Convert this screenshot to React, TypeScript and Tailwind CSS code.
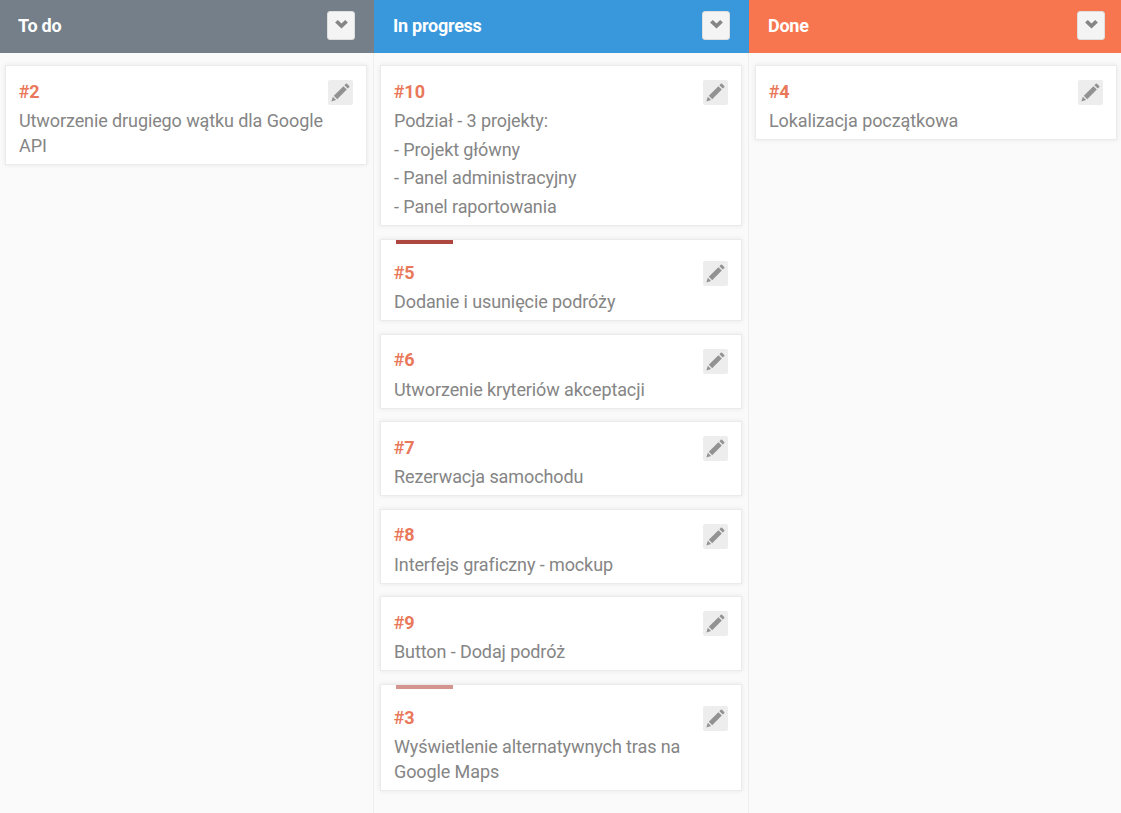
type Card = { id: number; lines: string[]; height: string; marker?: string };
type Column = { title: string; header: string; body: string; column: string; cards: Card[] };

const columns: Column[] = [
  {
    title: 'To do',
    header: 'bg-[#747f89] pl-[18px] pr-[19px]',
    body: 'pl-[5px] pr-[6px] border-r',
    column: 'w-[374px]',
    cards: [{ id: 2, lines: ['Utworzenie drugiego wątku dla Google API'], height: 'h-[100px]' }],
  },
  {
    title: 'In progress',
    header: 'bg-[#3998dc] pl-[19px] pr-[19px]',
    body: 'pl-[6px] pr-[6px] border-r',
    column: 'w-[375px]',
    cards: [
      {
        id: 10,
        lines: ['Podział - 3 projekty:', '- Projekt główny', '- Panel administracyjny', '- Panel raportowania'],
        height: 'h-[161px]',
      },
      { id: 5, lines: ['Dodanie i usunięcie podróży'], height: 'h-[81.9px]', marker: 'bg-[#ad4740]' },
      { id: 6, lines: ['Utworzenie kryteriów akceptacji'], height: 'h-[75px] mb-[-0.5px]' },
      { id: 7, lines: ['Rezerwacja samochodu'], height: 'h-[75px] mb-[-0.5px]' },
      { id: 8, lines: ['Interfejs graficzny - mockup'], height: 'h-[75px] mb-[-0.5px]' },
      { id: 9, lines: ['Button - Dodaj podróż'], height: 'h-[75px] mb-[-0.3px]' },
      {
        id: 3,
        lines: ['Wyświetlenie alternatywnych tras na Google Maps'],
        height: 'h-[107px]',
        marker: 'bg-[#d5958f]',
      },
    ],
  },
  {
    title: 'Done',
    header: 'bg-[#f8764f] pl-[19px] pr-[16px]',
    body: 'pl-[6px] pr-[4px]',
    column: 'w-[372px]',
    cards: [{ id: 4, lines: ['Lokalizacja początkowa'], height: 'h-[75px]' }],
  },
];

function Chevron() {
  return (
    <svg className="block h-[9px] w-[13px]" viewBox="0 0 13 9" fill="#858585">
      <path d="M2.8 0 6.5 3.4 10.2 0 12.9 2.6 6.5 8.6.1 2.6z" />
    </svg>
  );
}

function Pencil() {
  return (
    <svg className="block h-[19px] w-[19px]" viewBox="0 0 19 19" fill="#929292">
      <path d="M.4 18.4 1.8 13.8 5.1 17.1z" />
      <path d="M2.8 12.8 12.4 3.2 15.8 6.6 6.2 16.2z" />
      <path d="M13.4 2.2 14.8.8Q15.4.2 16 .8L18.2 3Q18.8 3.6 18.2 4.2L16.8 5.6z" />
    </svg>
  );
}

function TaskCard({ card }: { card: Card }) {
  return (
    <article
      className={`relative shrink-0 border border-[#ebebeb] bg-white px-[13px] shadow-[0_0_5px_rgba(0,0,0,0.08)] ${card.height} ${card.marker ? 'pt-[21px]' : 'pt-[14px]'}`}
    >
      {card.marker && <span className={`absolute left-[15px] top-0 h-1 w-[57px] ${card.marker}`} />}
      <div className="flex h-[28px] items-start justify-between">
        <span className="ml-[-0.5px] mt-[-0.5px] text-[18px] font-bold leading-[24px] text-[#e9785a]">
          <span className="font-medium">#</span>
          {card.id}
        </span>
        <button className="flex h-[25px] w-[25px] items-center justify-center rounded-[2px] bg-[#ededed]">
          <Pencil />
        </button>
      </div>
      <div className="flex flex-col gap-[3.7px] pr-[20px] text-[18px] leading-[25px] tracking-[-0.1px] text-[#858585]">
        {card.lines.map((line) => (
          <p key={line}>{line}</p>
        ))}
      </div>
    </article>
  );
}

export default function App() {
  return (
    <main className="flex h-[813px] w-[1121px] overflow-hidden bg-[#fafafa] font-['Roboto',sans-serif] font-normal">
      {columns.map((col) => (
        <section key={col.title} className={`flex shrink-0 flex-col ${col.column}`}>
          <header className={`flex h-[53px] shrink-0 items-center justify-between ${col.header}`}>
            <h2 className="mb-[2px] text-[18px] font-bold leading-[24px] tracking-[-0.25px] text-white">{col.title}</h2>
            <button className="mb-[2px] flex h-[29px] w-[28px] items-start justify-center rounded-[3px] border border-[#dedede] bg-[#f4f4f4] pt-[8px]">
              <Chevron />
            </button>
          </header>
          <div className={`flex flex-1 flex-col gap-[13px] border-[#eeeeee] pt-[12px] ${col.body}`}>
            {col.cards.map((card) => (
              <TaskCard key={card.id} card={card} />
            ))}
          </div>
        </section>
      ))}
    </main>
  );
}
